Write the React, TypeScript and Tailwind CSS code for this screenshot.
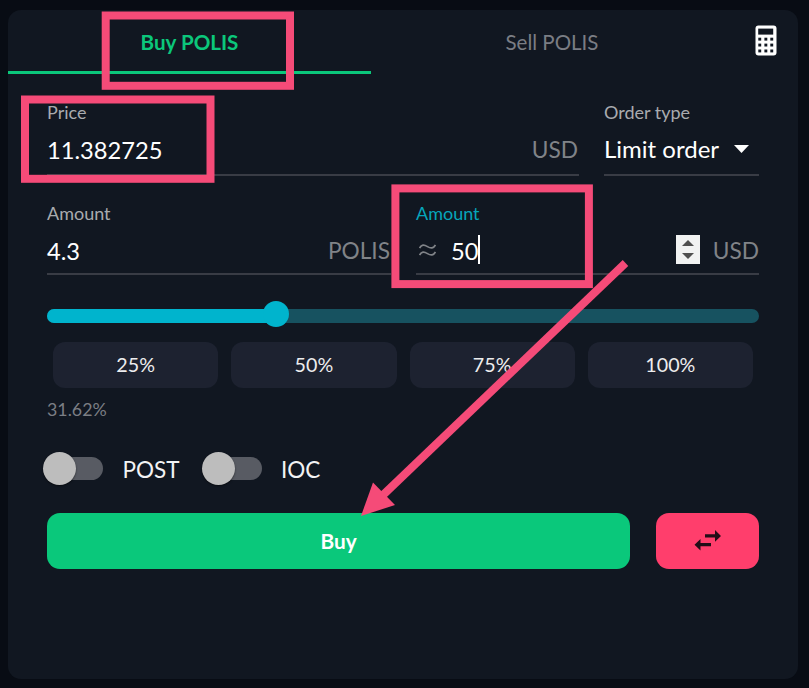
import type { ReactNode } from "react";
import { clsx } from "clsx";

const shares = ["25%", "50%", "75%", "100%"];

function Field({
  label,
  active,
  className,
  children,
}: {
  label: string;
  active?: boolean;
  className?: string;
  children: ReactNode;
}) {
  return (
    <div className={clsx("flex flex-col", className)}>
      <span className={clsx("text-[18px] leading-[22px]", active ? "text-[#06a5bb]" : "text-[#a9abaf]")}>
        {label}
      </span>
      <div className="flex flex-1 items-center border-b-2 border-[#393c45] text-[23.7px] leading-7 text-white">
        {children}
      </div>
    </div>
  );
}

function Unit({ className, children }: { className?: string; children: ReactNode }) {
  return <span className={clsx("text-[22.7px] text-[#808388]", className)}>{children}</span>;
}

function Toggle({ label }: { label: string }) {
  return (
    <label className="flex items-center">
      <span className="flex h-[23px] w-14 items-center rounded-full bg-[#585b63]">
        <span className="-ml-[4px] size-[33px] shrink-0 rounded-full bg-[#bdbdbd] shadow-[0_1px_2px_rgba(0,0,0,0.5)]" />
      </span>
      <span className="ml-[19.5px] pt-[2px] text-[22.5px] leading-7 text-[#f3f3f4]">{label}</span>
    </label>
  );
}

function CalculatorIcon() {
  return (
    <svg width="22" height="31" viewBox="0 0 22 31" aria-hidden="true">
      <rect x="0.5" y="0.5" width="21" height="30" rx="3" fill="#fff" />
      <rect x="3.2" y="3.6" width="15" height="6" fill="#111721" />
      {[12.7, 18.6, 24.5].map((y) =>
        [3.3, 9.4, 15.3].map((x) => <rect key={`${x}-${y}`} x={x} y={y} width="2.9" height="2.9" fill="#111721" />),
      )}
    </svg>
  );
}

function SwapIcon() {
  return (
    <svg width="28" height="22" viewBox="0 0 28 22" fill="#220d17" aria-hidden="true">
      <path d="M11 4.3H21V0L27 6L21 11.8V7.6H11Z" />
      <path d="M17 13H6.5V9L0.5 14.8L6.5 20.5V16.3H17Z" />
    </svg>
  );
}

function Annotations() {
  return (
    <svg className="pointer-events-none absolute inset-0" width="809" height="688" viewBox="0 0 809 688" aria-hidden="true">
      <g fill="none" stroke="#f54b78" strokeWidth="8">
        <rect x="105.7" y="15.5" width="184.3" height="70.3" />
        <rect x="25" y="99.5" width="185.5" height="79.3" />
        <rect x="395.4" y="188.4" width="193.5" height="95.7" />
        <path d="M625.5 263L382 496" />
      </g>
      <path d="M361 516L373 482.5L395 505Z" fill="#f54b78" />
    </svg>
  );
}

export default function App() {
  return (
    <div className="relative h-[688px] w-[809px] overflow-hidden bg-[#080c14] pt-[9.5px] pl-2 font-['Lato',sans-serif]">
      <div className="h-[669px] w-[789.5px] rounded-[13px] bg-[#111721]">
        <div className="flex h-[64.5px]">
          <button className="w-[363px] border-b-3 border-[#0bc77b] pt-[5px] text-[20.6px] font-bold text-[#0bc77b]">
            Buy POLIS
          </button>
          <button className="w-[362px] pt-0.5 text-[20.5px] text-[#7a7d84]">Sell POLIS</button>
          <div className="flex flex-1 pt-[15px] pl-[21.5px]">
            <CalculatorIcon />
          </div>
        </div>

        <div className="flex flex-col pt-[26.5px] pr-[38.5px] pl-[39px]">
          <div className="flex h-[75px] gap-[25px]">
            <Field label="Price" className="w-[532px]">
              <span className="pt-[4px]">11.382725</span>
              <Unit className="mr-px ml-auto pt-[3px]">USD</Unit>
            </Field>
            <Field label="Order type" className="flex-1">
              <span className="pt-px text-2xl leading-7">Limit order</span>
              <svg className="mt-px ml-[15px]" width="15" height="8" viewBox="0 0 15 8" aria-hidden="true">
                <path d="M0 0H15L7.5 8Z" fill="#fff" />
              </svg>
            </Field>
          </div>

          <div className="mt-[26.5px] flex h-[73px] gap-[25px]">
            <Field label="Amount" className="w-[344px]">
              <span className="pt-[4px]">4.3</span>
              <Unit className="mr-px ml-auto pt-[5px]">POLIS</Unit>
            </Field>
            <Field label="Amount" active className="flex-1">
              <svg
                className="mt-[3px] mr-[18px] ml-[3px]"
                width="17"
                height="12"
                viewBox="0 0 17 12"
                fill="none"
                stroke="#808388"
                strokeWidth="1.7"
                aria-hidden="true"
              >
                <path d="M0.6 4C2.5 0.4 5 0.4 8.5 2.6S14.5 4.4 16.4 1" />
                <path d="M0.6 11C2.5 7.4 5 7.4 8.5 9.6S14.5 11.4 16.4 8" />
              </svg>
              <span className="-ml-[3px] pt-[4px]">50</span>
              <span className="mt-[2px] h-[29px] w-[1.5px] bg-white" />
              <span className="mt-[2px] ml-auto flex h-[29px] w-6 flex-col items-center justify-center gap-[7px] bg-[#f1f2f2]">
                <svg width="12" height="6" viewBox="0 0 12 6" aria-hidden="true">
                  <path d="M0 6L6 0L12 6Z" fill="#4f4f4f" />
                </svg>
                <svg width="12" height="6" viewBox="0 0 12 6" aria-hidden="true">
                  <path d="M0 0H12L6 6Z" fill="#4f4f4f" />
                </svg>
              </span>
              <Unit className="ml-[13px] pt-[5px]">USD</Unit>
            </Field>
          </div>

          <div className="mt-[34px] flex h-[13.5px] items-center rounded-full bg-[#175260]">
            <div className="h-full w-[229px] rounded-l-full bg-[#00b4cd]" />
            <div className="-mt-[3px] -ml-[13.5px] size-[26px] shrink-0 rounded-full bg-[#00b4cd]" />
          </div>

          <div className="mt-[19px] flex h-[46.5px] gap-[13px] px-[6px]">
            {shares.map((share) => (
              <button key={share} className="flex-1 rounded-xl bg-[#1d2230] text-[19.7px] text-[#ededee]">
                {share}
              </button>
            ))}
          </div>
          <span className="mt-[10px] text-[17.8px] leading-[22px] text-[#7b7e84]">31.62%</span>

          <div className="mt-8 flex h-[33px] items-center gap-[26px]">
            <Toggle label="POST" />
            <Toggle label="IOC" />
          </div>

          <div className="mt-[27.5px] flex h-[56.5px] gap-[26px]">
            <button className="flex-1 rounded-[13px] bg-[#0ac87b] pb-px text-[20.8px] font-bold text-white">Buy</button>
            <button className="flex w-[103px] items-center justify-center rounded-[13px] bg-[#ff3e6c]">
              <SwapIcon />
            </button>
          </div>
        </div>
      </div>
      <Annotations />
    </div>
  );
}
